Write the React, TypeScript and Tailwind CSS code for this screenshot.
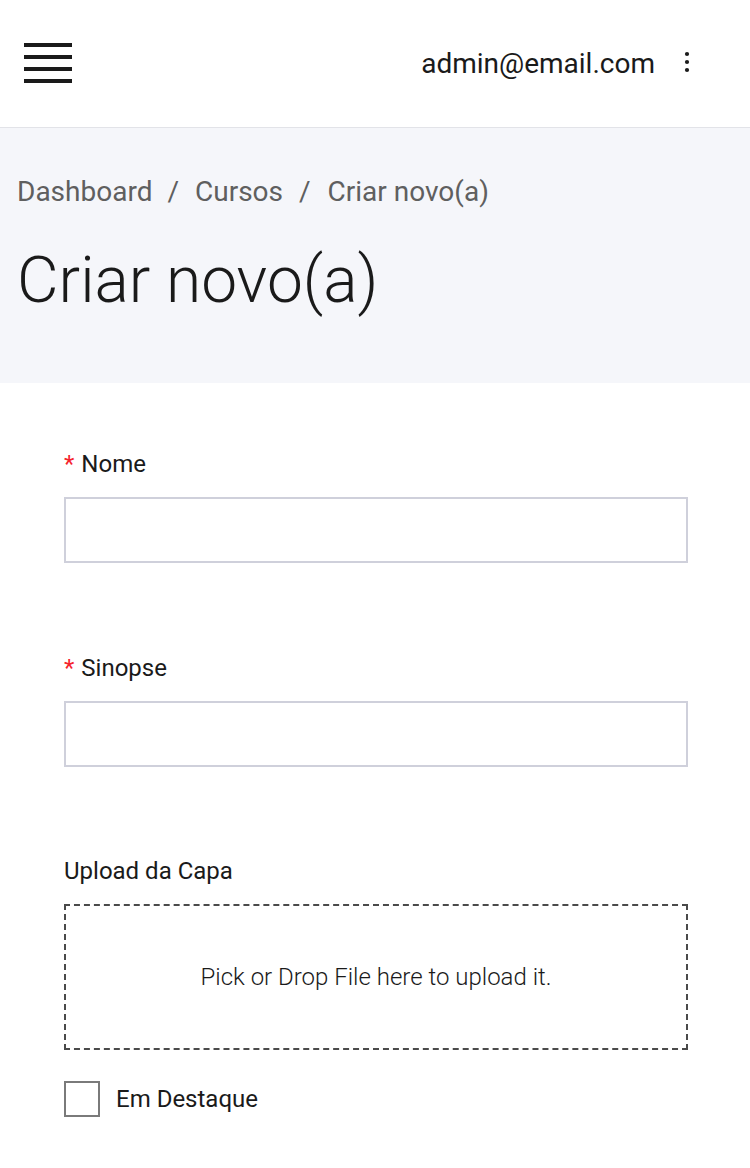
import React from 'react';

function Field({ label, required }: { label: string; required?: boolean }) {
  return (
    <div className="flex flex-col">
      <label className="text-[24px] leading-[28px] text-[#1a1a1a] mb-[19px]">
        {required && <span className="text-[#f5222d] mr-[7px]">*</span>}
        {label}
      </label>
      <input className="h-[66px] w-full border-2 border-[#cfd0db] bg-white outline-none" />
    </div>
  );
}

export default function App() {
  return (
    <div className="min-h-[1168px] bg-white font-['Roboto',sans-serif] text-[#1a1a1a]">
      <header className="h-[128px] flex items-center justify-between pl-[24px] pr-[59px] border-b border-[#e2e3e8]">
        <button className="flex flex-col gap-[8px] w-[48px] -mt-[1px]">
          <span className="block h-[4px] bg-[#1a1a1a]" />
          <span className="block h-[4px] bg-[#1a1a1a]" />
          <span className="block h-[4px] bg-[#1a1a1a]" />
          <span className="block h-[4px] bg-[#1a1a1a]" />
        </button>
        <div className="flex items-center gap-[28px]">
          <span className="text-[28px] text-[#1a1a1a]">admin@email.com</span>
          <svg width="8" height="22" viewBox="0 0 8 22" className="-mt-[3px]">
            <circle cx="4" cy="3" r="2.1" fill="#1a1a1a" />
            <circle cx="4" cy="11" r="2.1" fill="#1a1a1a" />
            <circle cx="4" cy="19" r="2.1" fill="#1a1a1a" />
          </svg>
        </div>
      </header>

      <section className="h-[255px] bg-[#f5f6fa] px-[17px] pt-[44px]">
        <nav className="flex items-center text-[28px] text-[#5f5f5f] leading-[40px]">
          <span>Dashboard</span>
          <span className="ml-[15px] mr-[16px]">/</span>
          <span>Cursos</span>
          <span className="ml-[16px] mr-[17px]">/</span>
          <span>Criar novo(a)</span>
        </nav>
        <h1 className="mt-[29px] text-[64px] font-light leading-[80px] text-[#1a1a1a]">Criar novo(a)</h1>
      </section>

      <main className="pl-[64px] pr-[62px] pt-[67px] pb-[50px] flex flex-col">
        <Field label="Nome" required />
        <div className="h-[91px]" />
        <Field label="Sinopse" required />
        <div className="h-[90px]" />
        <div className="flex flex-col">
          <label className="text-[24px] leading-[28px] mb-[19px]">Upload da Capa</label>
          <div className="h-[146px] border-2 border-dashed border-[#4a4a4a] flex items-center justify-center">
            <span className="text-[24px] font-light text-[#1a1a1a]">Pick or Drop File here to upload it.</span>
          </div>
        </div>
        <label className="mt-[31px] flex items-center gap-[16px]">
          <span className="w-[36px] h-[36px] border-2 border-[#7a7a7a] bg-white" />
          <span className="text-[24px]">Em Destaque</span>
        </label>
      </main>
    </div>
  );
}
